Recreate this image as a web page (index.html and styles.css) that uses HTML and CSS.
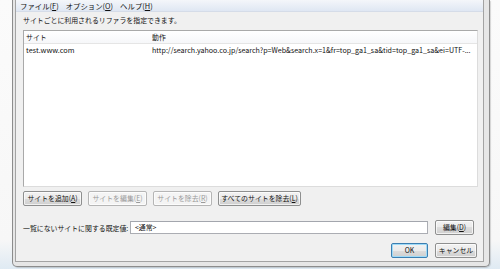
FILE: index.html
```html
<!DOCTYPE html>
<html lang="ja">
<head>
<meta charset="utf-8">
<link rel="stylesheet" href="styles.css">
</head>
<body>
<div class="window">
  <div class="client">
    <div class="menubar">
      <span class="menu">ファイル(<u>F</u>)</span>
      <span class="menu">オプション(<u>O</u>)</span>
      <span class="menu">ヘルプ(<u>H</u>)</span>
    </div>
    <div class="content">
      <div class="desc">サイトごとに利用されるリファラを指定できます。</div>
      <div class="list">
        <div class="row head">
          <div class="c1">サイト</div>
          <div class="c2">動作</div>
        </div>
        <div class="row item">
          <div class="c1">test.www.com</div>
          <div class="c2">http://search.yahoo.co.jp/search?p=Web&amp;search.x=1&amp;fr=top_ga1_sa&amp;tid=top_ga1_sa&amp;ei=UTF-...</div>
        </div>
      </div>
      <div class="btnrow">
        <button class="btn">サイトを追加(<u>A</u>)</button>
        <button class="btn dis">サイトを編集(<u>E</u>)</button>
        <button class="btn dis">サイトを除去(<u>R</u>)</button>
        <button class="btn">すべてのサイトを除去(<u>L</u>)</button>
      </div>
      <div class="defrow">
        <span class="label">一覧にないサイトに関する既定値:</span>
        <div class="input">&lt;通常&gt;</div>
        <button class="btn edit">編集(<u>D</u>)</button>
      </div>
      <div class="okrow">
        <button class="btn ok">OK</button>
        <button class="btn cancel">キャンセル</button>
      </div>
    </div>
  </div>
</div>
</body>
</html>
```
FILE: styles.css
```css
html, body {
  margin: 0;
  padding: 0;
}
body {
  width: 500px;
  height: 269px;
  overflow: hidden;
  background: linear-gradient(#fbfbfb 0, #f7f7f7 240px, #dfeaf3 269px);
  font-family: "Noto Sans CJK JP", "Noto Sans", sans-serif;
  font-size: 6.9px;
  color: #111;
}
.window {
  margin-left: 12px;
  width: 478px;
  height: 267px;
  box-sizing: border-box;
  border: 1px solid #8c8c8c;
  border-top: none;
  border-radius: 0 0 5px 5px;
  background: #e6e6e6;
  padding: 0 5px 4px 2px;
  box-shadow: 1px 1px 1px rgba(0,0,0,0.15);
}
.client {
  height: 100%;
  box-sizing: border-box;
  border: 1px solid #a3a3a3;
  border-top: none;
  background: #f0f0f0;
  display: flex;
  flex-direction: column;
}
.menubar {
  height: 12px;
  box-sizing: border-box;
  padding: 0 0 0 4px;
  background: linear-gradient(#f4f6fa, #dfe7f3);
  border-bottom: 1px solid #d5dce8;
  display: flex;
  gap: 7px;
  line-height: 11px;
  font-size: 7.4px;
}
.content {
  padding: 0 5px 0 7px;
  display: flex;
  flex-direction: column;
}
.desc {
  margin-top: 3px;
  height: 10px;
  line-height: 10px;
}
.list {
  margin-top: 5px;
  height: 155px;
  background: #fff;
  border: 1px solid #a9a9a9;
  border-right-color: #dcdcdc;
  border-bottom-color: #dcdcdc;
}
.row {
  display: flex;
  height: 12px;
  line-height: 12px;
  white-space: nowrap;
}
.row.head {
  border-bottom: 1px solid #e5e5e5;
  background: linear-gradient(#ffffff, #f6f7f9);
  height: 12px;
}
.c1 {
  width: 126px;
  padding-left: 2px;
  flex: none;
}
.row.item .c1 { font-size: 7.3px; }
.c2 {
  flex: 1;
  overflow: hidden;
}
.row.item .c2 { font-size: 7.1px; }
.btnrow {
  margin-top: 4px;
  display: flex;
  gap: 6px;
}
.btn {
  font-family: inherit;
  font-size: 6.9px;
  color: #111;
  height: 15px;
  padding: 0;
  line-height: 13px;
  border: 1px solid #8e8f8f;
  border-radius: 2px;
  background: linear-gradient(#f2f2f2 0, #ebebeb 50%, #dddddd 50%, #cfcfcf 100%);
  box-shadow: inset 0 0 0 1px rgba(255,255,255,0.7);
  white-space: nowrap;
}
.btn.dis {
  color: #9a9a9a;
  border-color: #b5b5b5;
  background: #f4f4f4;
}
.btnrow .btn:nth-child(1) { width: 59px; }
.btnrow .btn:nth-child(2) { width: 59px; }
.btnrow .btn:nth-child(3) { width: 59px; }
.btnrow .btn:nth-child(4) { width: 83px; }
.defrow {
  margin-top: 14px;
  display: flex;
  align-items: center;
  height: 15px;
}
.label {
  width: 107px;
  flex: none;
}
.input {
  width: 298px;
  height: 13px;
  box-sizing: border-box;
  background: #fff;
  border: 1px solid #abadb3;
  border-top-color: #a3a6ad;
  padding-left: 4px;
  line-height: 11px;
}
.btn.edit {
  margin-left: 7px;
  width: 39px;
}
.okrow {
  margin-top: 8px;
  display: flex;
  justify-content: flex-end;
  gap: 7px;
  padding-right: 1px;
}
.btn.ok {
  width: 37px;
  border-color: #3c7fb1;
  box-shadow: inset 0 0 0 1px #9fdbf8;
}
.btn.cancel {
  width: 42px;
}
```
